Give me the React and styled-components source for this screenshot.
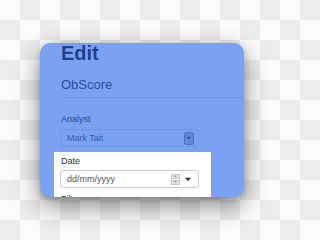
import React from "react";
import styled, { createGlobalStyle } from "styled-components";

const Global = createGlobalStyle`
  html, body { margin: 0; padding: 0; }
  body {
    width: 291px;
    height: 240px;
    overflow: hidden;
    font-family: "Liberation Sans", Arial, sans-serif;
    background-color: #fff;
    background-image: conic-gradient(#ededed 25%, #fcfcfc 0 50%, #ededed 0 75%, #fcfcfc 0);
    background-size: 40px 40px;
  }
`;

const Stage = styled.div`
  padding: 43px 0 0 40px;
  height: 240px;
  box-sizing: border-box;
`;

const Card = styled.div`
  width: 204px;
  height: 154px;
  background: #7ba2f2;
  border-radius: 11px;
  overflow: hidden;
  box-shadow: 0 9px 26px rgba(0, 0, 0, 0.45), 0 2px 6px rgba(0, 0, 0, 0.2);
  display: flex;
  flex-direction: column;
`;

const Header = styled.div`
  padding: 0 0 3px 21px;
`;

const Title = styled.div`
  font-size: 20px;
  line-height: 20px;
  font-weight: bold;
  color: #20408e;
`;

const Subtitle = styled.div`
  margin-top: 14px;
  font-size: 13px;
  line-height: 16px;
  color: #2b4c98;
  padding-bottom: 4px;
  border-bottom: 1px solid #6e93e3;
`;

const Body = styled.div`
  padding: 13px 0 0 20px;
  display: flex;
  flex-direction: column;
  align-items: flex-start;
`;

const Label = styled.div`
  font-size: 9px;
  line-height: 11px;
  padding-left: 1px;
  color: ${(p) => (p.$light ? "#333333" : "#2a4690")};
`;

const Select = styled.div`
  margin-top: 4px;
  width: 139px;
  height: 18px;
  box-sizing: border-box;
  border: 1px solid #6f95e6;
  border-radius: 3px;
  display: flex;
  align-items: center;
  justify-content: space-between;
  padding: 0 4px 0 6px;
`;

const SelectText = styled.span`
  font-size: 9px;
  color: #3658b0;
`;

const SelectButton = styled.span`
  width: 10px;
  height: 13px;
  box-sizing: border-box;
  background: #5f86dc;
  border: 1px solid #4d73c8;
  border-radius: 2px;
  display: flex;
  align-items: center;
  justify-content: center;
`;

const Panel = styled.div`
  margin: 5px 0 0 -6px;
  width: 157px;
  background: #ffffff;
  padding: 4px 12px 10px 6px;
  box-sizing: border-box;
  display: flex;
  flex-direction: column;
  align-items: flex-start;
`;

const DateInput = styled.div`
  margin-top: 3px;
  width: 139px;
  height: 18px;
  box-sizing: border-box;
  border: 1px solid #cccccc;
  border-radius: 3px;
  display: flex;
  align-items: center;
  padding: 0 7px 0 6px;
`;

const DateText = styled.span`
  flex: 1;
  font-size: 9px;
  color: #555555;
`;

const Spinner = styled.span`
  width: 9px;
  height: 11px;
  display: flex;
  flex-direction: column;
  gap: 1px;
  margin-right: 5px;
`;

const SpinHalf = styled.span`
  flex: 1;
  background: #e4e4e4;
  border: 1px solid #c8c8c8;
  display: flex;
  align-items: center;
  justify-content: center;
`;

const NextLabel = styled(Label)`
  margin-top: 6px;
`;

function Tri({ up, color, w = 5, h = 3 }) {
  return (
    <svg width={w} height={h} viewBox="0 0 5 3" style={{ display: "block" }}>
      <polygon points={up ? "0,3 5,3 2.5,0" : "0,0 5,0 2.5,3"} fill={color} />
    </svg>
  );
}

export default function App() {
  return (
    <>
      <Global />
      <Stage>
        <Card>
          <Header>
            <Title>Edit</Title>
            <Subtitle>ObScore</Subtitle>
          </Header>
          <Body>
            <Label>Analyst</Label>
            <Select>
              <SelectText>Mark Tait</SelectText>
              <SelectButton>
                <Tri color="#1c2f66" w={4} h={2} />
              </SelectButton>
            </Select>
            <Panel>
              <Label $light>Date</Label>
              <DateInput>
                <DateText>dd/mm/yyyy</DateText>
                <Spinner>
                  <SpinHalf>
                    <Tri up color="#999" w={3} h={2} />
                  </SpinHalf>
                  <SpinHalf>
                    <Tri color="#999" w={3} h={2} />
                  </SpinHalf>
                </Spinner>
                <Tri color="#333" w={6} h={5} />
              </DateInput>
              <NextLabel $light>Filter</NextLabel>
            </Panel>
          </Body>
        </Card>
      </Stage>
    </>
  );
}
